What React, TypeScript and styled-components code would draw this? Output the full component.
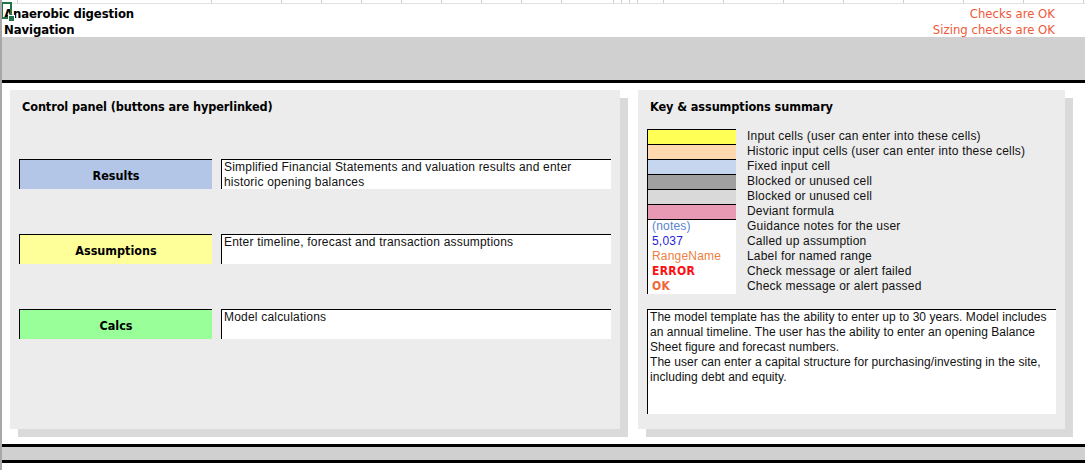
import styled, { createGlobalStyle } from "styled-components";

const GlobalStyle = createGlobalStyle`
    html, body {
        margin: 0;
        padding: 0;
        background: #ffffff;
    }
    body {
        font-family: "Liberation Sans", Arial, sans-serif;
        font-size: 12px;
        color: #000000;
    }
`;

const Sheet = styled.div`
    position: relative;
    width: 1083px;
    height: 470px;
    border-left: 2px solid #a8a8a8;
    background: #ffffff;
    overflow: hidden;
`;

const GridStrip = styled.div`
    height: 4px;
    display: flex;
    border-bottom: 1px solid #e2e2e2;
    box-sizing: border-box;
`;

const GridCell = styled.div<{ $w: number }>`
    width: ${(p) => p.$w}px;
    flex: none;
    border-right: 1px solid #cfcfcf;
    box-sizing: border-box;
`;

const Selection = styled.div`
    position: absolute;
    left: -1px;
    top: 2px;
    width: 11px;
    height: 17px;
    border: 2px solid #217346;
    box-sizing: border-box;
    &::after {
        content: "";
        position: absolute;
        right: -5px;
        bottom: -5px;
        width: 5px;
        height: 5px;
        background: #217346;
        border: 1px solid #ffffff;
    }
`;

const Header = styled.div`
    display: flex;
    flex-direction: column;
    padding: 1px 30px 0 2px;
    height: 32px;
`;

const HeaderRow = styled.div`
    display: flex;
    justify-content: space-between;
    align-items: center;
    height: 16px;
`;

const Heading = styled.div`
    font-family: "DejaVu Sans Condensed", "DejaVu Sans", sans-serif;
    font-stretch: condensed;
    font-weight: bold;
    font-size: 13px;
    letter-spacing: -0.1px;
`;

const Check = styled.div`
    font-family: "DejaVu Sans Condensed", "DejaVu Sans", sans-serif;
    font-stretch: condensed;
    font-size: 13px;
    color: #f0583a;
`;

const Band = styled.div<{ $h: number }>`
    height: ${(p) => p.$h}px;
    background: #d0d0d0;
    border-bottom: 3px solid #000000;
`;

const BottomBand = styled.div`
    margin-top: 15px;
    height: 13px;
    background: #d0d0d0;
    border-top: 3px solid #000000;
    border-bottom: 3px solid #000000;
`;

const Content = styled.div`
    display: flex;
    gap: 18px;
    padding: 7px 0 0 8px;
`;

const Panel = styled.div<{ $w: number }>`
    width: ${(p) => p.$w}px;
    height: 339px;
    background: #ececec;
    box-shadow: 8px 8px 0 #dadada;
    box-sizing: border-box;
    padding: 10px 0 0 9px;
    display: flex;
    flex-direction: column;
`;

const PanelTitle = styled.div`
    font-family: "DejaVu Sans Condensed", "DejaVu Sans", sans-serif;
    font-stretch: condensed;
    font-weight: bold;
    font-size: 12.6px;
    letter-spacing: -0.1px;
    padding-left: 3px;
    height: 14px;
    line-height: 14px;
`;

const NavList = styled.div`
    display: flex;
    flex-direction: column;
    gap: 45px;
    margin-top: 45px;
`;

const NavRow = styled.div`
    display: flex;
    gap: 9px;
    height: 30px;
`;

const NavButton = styled.div<{ $bg: string }>`
    width: 193px;
    background: ${(p) => p.$bg};
    border-top: 1px solid #000000;
    border-left: 1px solid #000000;
    box-sizing: border-box;
    display: flex;
    align-items: center;
    justify-content: center;
    font-family: "DejaVu Sans Condensed", "DejaVu Sans", sans-serif;
    font-stretch: condensed;
    font-weight: bold;
    font-size: 12.5px;
    padding-top: 2px;
    cursor: pointer;
`;

const TextBox = styled.div<{ $w: number; $h: number }>`
    width: ${(p) => p.$w}px;
    height: ${(p) => p.$h}px;
    background: #ffffff;
    border-top: 1px solid #000000;
    border-left: 1px solid #000000;
    box-sizing: border-box;
    padding: 0 2px;
    font-size: 12px;
    line-height: 15px;
    letter-spacing: 0.2px;
    color: #111111;
`;

const KeyTable = styled.div`
    display: grid;
    grid-template-columns: 89px 1fr;
    column-gap: 11px;
    margin-top: 15px;
`;

const Swatch = styled.div<{ $bg: string }>`
    height: 15px;
    background: ${(p) => p.$bg};
    border-left: 1px solid #000000;
    border-top: 1px solid #000000;
    box-sizing: border-box;
`;

const SampleCell = styled.div<{ $color: string; $bold?: boolean; $first?: boolean }>`
    height: 15px;
    background: #ffffff;
    border-left: 1px solid #000000;
    border-top: ${(p) => (p.$first ? "1px solid #000000" : "none")};
    box-sizing: border-box;
    padding-left: 4px;
    line-height: ${(p) => (p.$first ? "13px" : "15px")};
    color: ${(p) => p.$color};
    font-family: ${(p) =>
        p.$bold
            ? `"DejaVu Sans Condensed", "DejaVu Sans", sans-serif`
            : `"Liberation Sans", Arial, sans-serif`};
    font-stretch: condensed;
    font-weight: ${(p) => (p.$bold ? "bold" : "normal")};
    font-size: 12px;
    letter-spacing: ${(p) => (p.$bold ? "0.3px" : "0.2px")};
`;

const KeyLabel = styled.div`
    height: 15px;
    line-height: 15px;
    font-size: 12px;
    letter-spacing: 0.2px;
    color: #111111;
`;

const NotesBox = styled(TextBox)`
    margin-top: 15px;
    letter-spacing: 0.05px;
`;

const navItems = [
    {
        label: "Results",
        bg: "#b4c6e7",
        text: "Simplified Financial Statements and valuation results and enter historic opening balances",
    },
    { label: "Assumptions", bg: "#ffff99", text: "Enter timeline, forecast and transaction assumptions" },
    { label: "Calcs", bg: "#99ff99", text: "Model calculations" },
];

const swatches = [
    { bg: "#ffff55", text: "Input cells (user can enter into these cells)" },
    { bg: "#ffd8b0", text: "Historic input cells (user can enter into these cells)" },
    { bg: "#c5d6ee", text: "Fixed input cell" },
    { bg: "#a0a0a0", text: "Blocked or unused cell" },
    { bg: "#d9d9d9", text: "Blocked or unused cell" },
    { bg: "#e89ab4", text: "Deviant formula" },
];

const samples = [
    { sample: "(notes)", color: "#5a82d0", text: "Guidance notes for the user" },
    { sample: "5,037", color: "#1f1fd8", text: "Called up assumption" },
    { sample: "RangeName", color: "#ee8040", text: "Label for named range" },
    { sample: "ERROR", color: "#ff1010", bold: true, text: "Check message or alert failed" },
    { sample: "OK", color: "#f06838", bold: true, text: "Check message or alert passed" },
];

const gridCols = [16, 194, 70, 40, 40, 40, 40, 40, 40, 40, 52, 8, 8, 8, 26, 60, 60, 60, 60, 60, 60, 60];

const App = () => {
    return (
        <>
            <GlobalStyle />
            <Sheet>
                <GridStrip>
                    {gridCols.map((w, i) => (
                        <GridCell key={i} $w={w} />
                    ))}
                </GridStrip>
                <Selection />
                <Header>
                    <HeaderRow>
                        <Heading>Anaerobic digestion</Heading>
                        <Check>Checks are OK</Check>
                    </HeaderRow>
                    <HeaderRow>
                        <Heading>Navigation</Heading>
                        <Check>Sizing checks are OK</Check>
                    </HeaderRow>
                </Header>
                <Band $h={43} />
                <Content>
                    <Panel $w={610}>
                        <PanelTitle>Control panel (buttons are hyperlinked)</PanelTitle>
                        <NavList>
                            {navItems.map((item) => (
                                <NavRow key={item.label}>
                                    <NavButton $bg={item.bg}>{item.label}</NavButton>
                                    <TextBox $w={390} $h={30}>
                                        {item.text}
                                    </TextBox>
                                </NavRow>
                            ))}
                        </NavList>
                    </Panel>
                    <Panel $w={427}>
                        <PanelTitle>Key &amp; assumptions summary</PanelTitle>
                        <KeyTable>
                            {swatches.flatMap((s, i) => [
                                <Swatch key={`s${i}`} $bg={s.bg} />,
                                <KeyLabel key={`l${i}`}>{s.text}</KeyLabel>,
                            ])}
                            {samples.flatMap((s, i) => [
                                <SampleCell
                                    key={`c${i}`}
                                    $color={s.color}
                                    $bold={s.bold}
                                    $first={i === 0}
                                >
                                    {s.sample}
                                </SampleCell>,
                                <KeyLabel key={`t${i}`}>{s.text}</KeyLabel>,
                            ])}
                        </KeyTable>
                        <NotesBox $w={409} $h={105}>
                            The model template has the ability to enter up to 30 years. Model includes an annual
                            timeline. The user has the ability to enter an opening Balance Sheet figure and
                            forecast numbers.
                            <br />
                            The user can enter a capital structure for purchasing/investing in the site,
                            including debt and equity.
                        </NotesBox>
                    </Panel>
                </Content>
                <BottomBand />
            </Sheet>
        </>
    );
};

export default App;
